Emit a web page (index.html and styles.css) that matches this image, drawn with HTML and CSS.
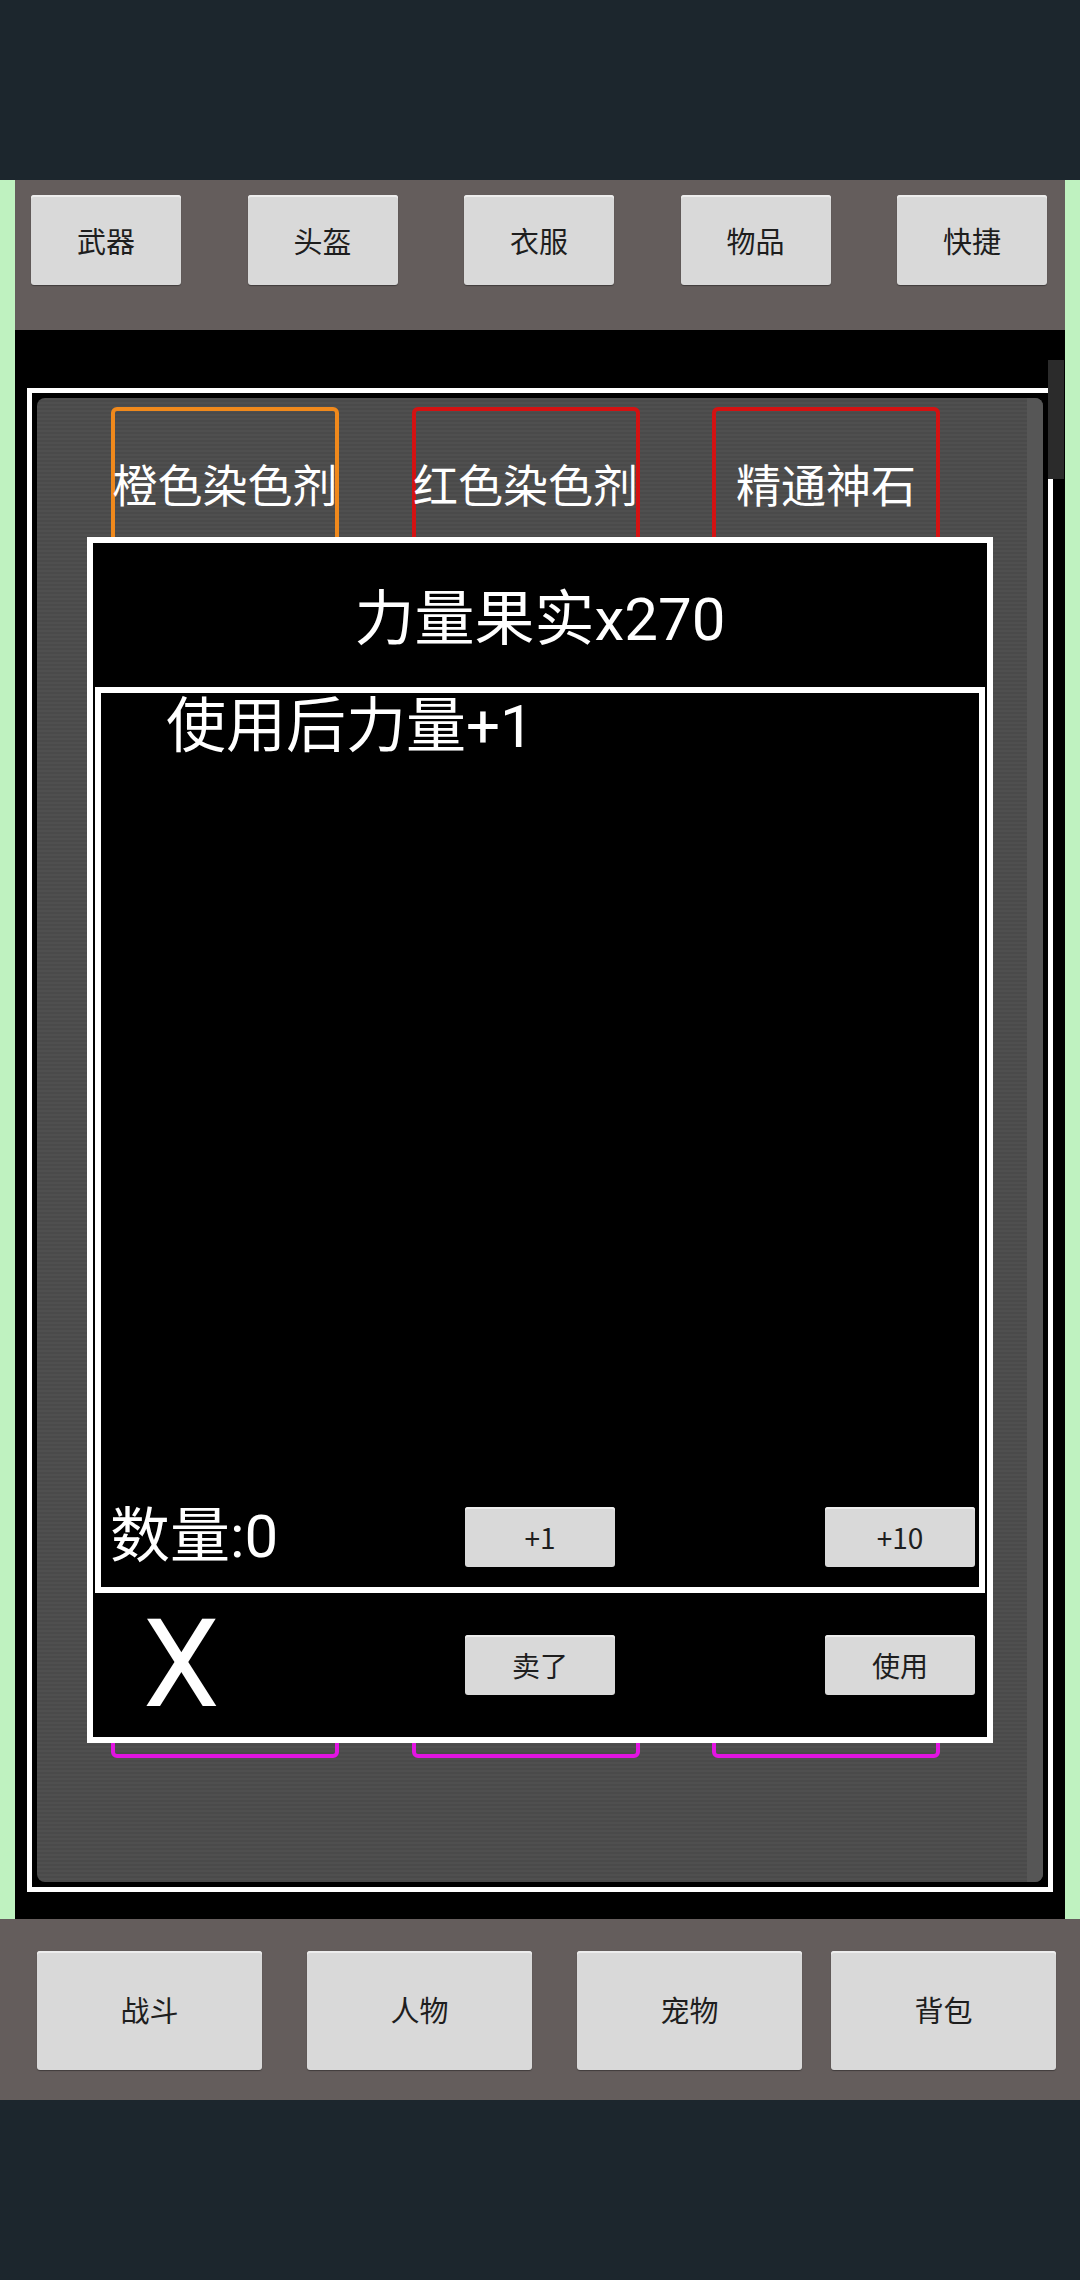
FILE: index.html
```html
<!DOCTYPE html>
<html lang="zh-CN">
<head>
<meta charset="utf-8">
<title>背包</title>
<link rel="stylesheet" href="styles.css">
</head>
<body>
<div class="statusbar"></div>
<div class="app">
  <div class="main">
    <div class="edge"></div>
    <div class="content">
      <div class="topbar">
        <div class="btn btn-top">武器</div>
        <div class="btn btn-top">头盔</div>
        <div class="btn btn-top">衣服</div>
        <div class="btn btn-top">物品</div>
        <div class="btn btn-top">快捷</div>
      </div>
      <div class="stage">
        <div class="frame">
          <div class="panel">
            <div class="slots">
              <div class="slot orange">橙色染色剂</div>
              <div class="slot red">红色染色剂</div>
              <div class="slot red">精通神石</div>
              <div class="slot red"></div>
              <div class="slot red"></div>
              <div class="slot red"></div>
              <div class="slot red"></div>
              <div class="slot red"></div>
              <div class="slot red"></div>
              <div class="slot magenta"></div>
              <div class="slot magenta"></div>
              <div class="slot magenta"></div>
              <div class="slot magenta"></div>
              <div class="slot magenta"></div>
              <div class="slot magenta"></div>
              <div class="slot magenta"></div>
              <div class="slot magenta"></div>
              <div class="slot magenta"></div>
              <div class="slot magenta"></div>
              <div class="slot magenta"></div>
              <div class="slot magenta"></div>
            </div>
            <div class="track"></div>
          </div>
        </div>
        <div class="thumb"></div>
      </div>
    </div>
    <div class="edge"></div>
  </div>
  <div class="bottombar">
    <div class="btn btn-bottom">战斗</div>
    <div class="btn btn-bottom">人物</div>
    <div class="btn btn-bottom">宠物</div>
    <div class="btn btn-bottom">背包</div>
  </div>
</div>
<div class="navbar"></div>

<div class="dialog">
  <div class="dlg-title">力量果实x270</div>
  <div class="dlg-body">
    <div class="desc">使用后力量+1</div>
    <div class="qty-row">
      <div class="qty">数量:0</div>
      <div class="btn btn-dlg">+1</div>
      <div class="spacer"></div>
      <div class="btn btn-dlg">+10</div>
    </div>
  </div>
  <div class="dlg-actions">
    <div class="close">X</div>
    <div class="btn btn-dlg">卖了</div>
    <div class="spacer"></div>
    <div class="btn btn-dlg">使用</div>
  </div>
</div>
</body>
</html>
```

FILE: styles.css
```css
* { box-sizing: border-box; }
html, body { margin: 0; padding: 0; }
body {
  width: 1080px;
  height: 2280px;
  background: #1c262d;
  font-family: Roboto, "Noto Sans CJK SC", sans-serif;
  overflow: hidden;
}
.statusbar { height: 180px; }
.navbar { height: 180px; }

.main { display: flex; height: 1739px; }
.edge { width: 15px; background: #bff2c0; }
.content { flex: 1; display: flex; flex-direction: column; }

.topbar {
  height: 150px;
  background: #645d5c;
  display: flex;
  justify-content: space-between;
  align-items: flex-start;
  padding: 15px 18px 0 16px;
}

.btn {
  background: #d9d9d9;
  color: #1e1e1e;
  display: flex;
  align-items: center;
  justify-content: center;
  border-radius: 3px;
  box-shadow: inset 0 2px 0 #ededed, 0 1px 1px rgba(0,0,0,0.35);
  font-family: "Noto Sans CJK SC", sans-serif;
}
.btn-top { width: 150px; height: 90px; font-size: 29px; }

.stage {
  flex: 1;
  background: #000;
  position: relative;
  padding: 58px 12px 27px;
}
.frame {
  height: 100%;
  border: 5px solid #fff;
  padding: 5px;
}
.panel {
  height: 100%;
  border-radius: 8px;
  display: flex;
  overflow: hidden;
  background: repeating-linear-gradient(to bottom, #4f4f4f 0, #4f4f4f 2px, #4a4a4a 2px, #4a4a4a 4px);
}
.slots {
  flex: 1;
  display: grid;
  grid-template-columns: repeat(3, 228px);
  grid-auto-rows: 153px;
  column-gap: 72.5px;
  row-gap: 46.67px;
  padding: 9px 0 0 74px;
  align-content: start;
}
.track { width: 16px; background: #565656; }
.slot {
  border: 4px solid;
  border-radius: 6px;
  display: flex;
  align-items: center;
  justify-content: center;
  color: #fff;
  font-size: 45px;
  white-space: nowrap;
  font-family: "Noto Sans CJK SC", sans-serif;
}
.orange { border-color: #f0891c; }
.red { border-color: #d41212; }
.magenta { border-color: #e214e2; }

.thumb {
  position: absolute;
  left: 1033px;
  top: 30px;
  width: 16px;
  height: 119px;
  background: #2b2b2b;
}

.bottombar {
  height: 181px;
  background: #645d5c;
  display: flex;
  align-items: flex-start;
  padding: 32px 0 0 37px;
}
.btn-bottom { width: 225px; height: 119px; font-size: 29px; padding-bottom: 3px; }
.btn-bottom + .btn-bottom { margin-left: 45px; }
.btn-bottom:last-child { margin-left: 29px; }

.dialog {
  position: fixed;
  left: 87px;
  top: 537px;
  width: 906px;
  height: 1206px;
  border: 6px solid #fff;
  background: #000;
  color: #fff;
  display: flex;
  flex-direction: column;
}
.dlg-title {
  height: 144px;
  display: flex;
  align-items: center;
  justify-content: center;
  font-size: 60px;
  padding-bottom: 4px;
}
.dlg-body {
  height: 906px;
  margin: 0 2px;
  border: 6px solid #fff;
  display: flex;
  flex-direction: column;
  justify-content: space-between;
}
.desc {
  font-size: 60px;
  line-height: 68px;
  padding: 0 0 0 65px;
}
.qty-row {
  display: grid;
  grid-template-columns: 1fr 150px 210px 150px;
  align-items: center;
  padding: 0 4px 16px 9px;
}
.qty { font-size: 60px; line-height: 68px; }
.btn-dlg { width: 150px; height: 60px; font-size: 28px; }
.dlg-actions {
  height: 144px;
  display: grid;
  grid-template-columns: 1fr 150px 210px 150px;
  align-items: center;
  padding: 0 12px 0 0;
}
.close {
  font-size: 122px;
  line-height: 1;
  padding-left: 50px;
}
```
